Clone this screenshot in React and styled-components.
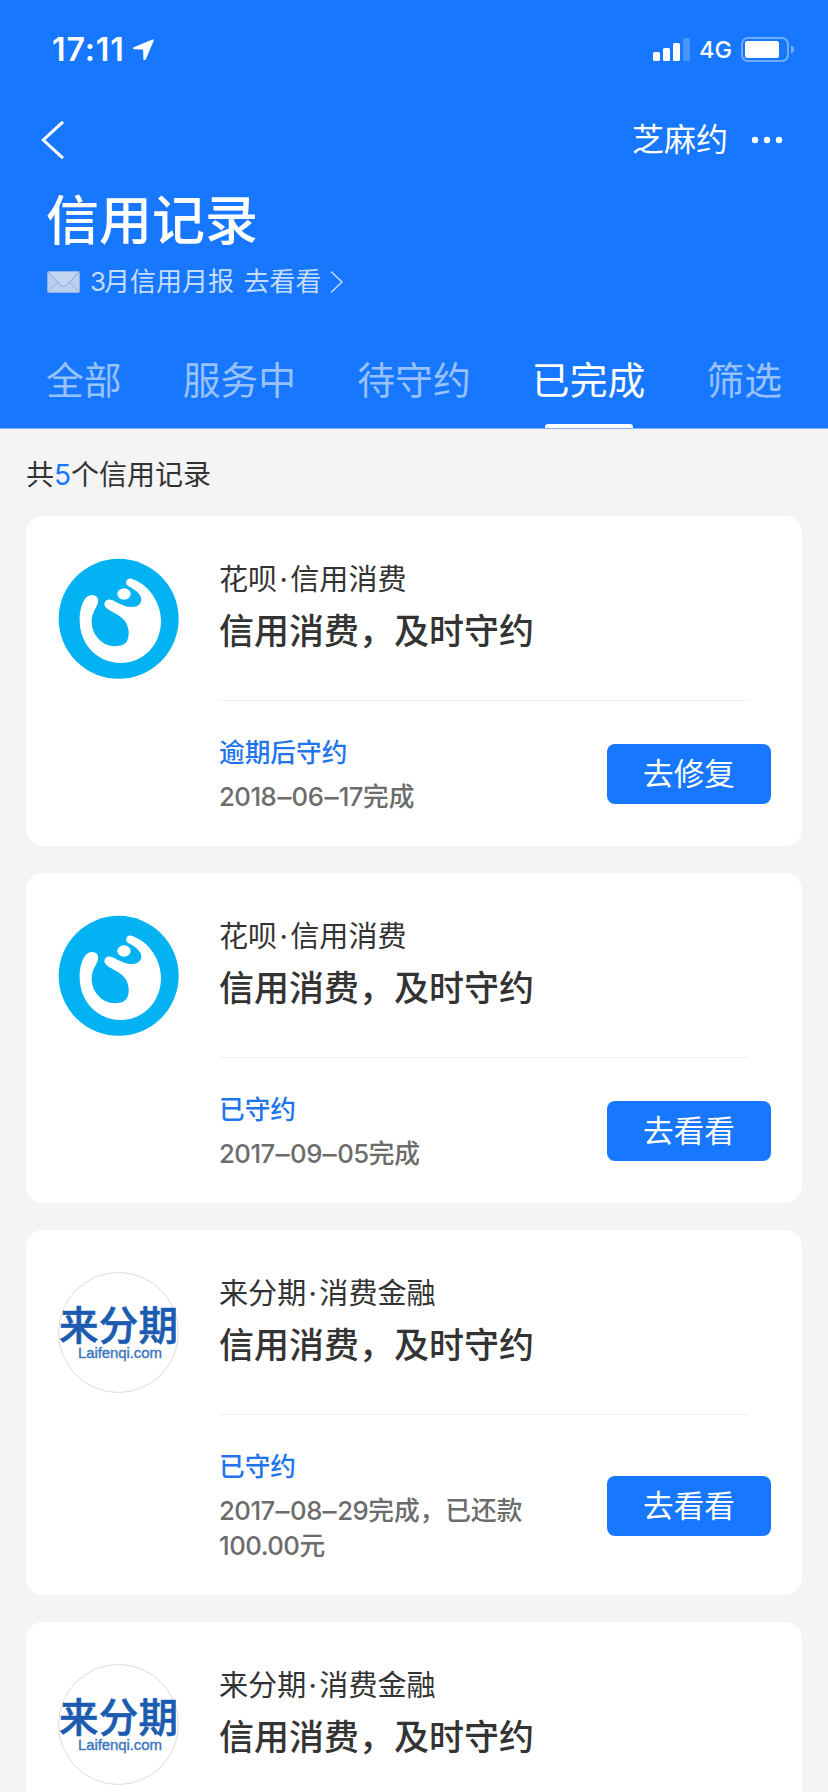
import React from "react";
import styled, { createGlobalStyle } from "styled-components";

const Global = createGlobalStyle`
  * { box-sizing: border-box; }
  body {
    margin: 0;
    background: #f4f4f4;
    font-family: Inter, "Noto Sans CJK SC", sans-serif;
    color: #333;
  }
`;

const Screen = styled.div`
  width: 828px;
  height: 1792px;
  overflow: hidden;
  background: #f4f4f4;
`;

const Header = styled.header`
  height: 429px;
  background: #1777ff;
  border-bottom: 1px solid #7fb2fb;
  color: #fff;
  display: flex;
  flex-direction: column;
`;

const StatusBar = styled.div`
  height: 98px;
  padding: 2px 33px 0 52px;
  display: flex;
  align-items: center;
  justify-content: space-between;
`;

const Clock = styled.div`
  display: flex;
  align-items: center;
  gap: 8px;
  font-size: 32px;
  font-weight: 600;
  line-height: 40px;
  letter-spacing: 0.9px;
`;

const Signals = styled.div`
  display: flex;
  align-items: center;
  gap: 9px;
  font-size: 23.5px;
  font-weight: 500;
  line-height: 30px;
`;

const NavBar = styled.div`
  height: 84px;
  padding: 0 45px 0 41px;
  display: flex;
  align-items: center;
  justify-content: space-between;
`;

const NavActions = styled.div`
  display: flex;
  align-items: center;
  gap: 23px;
  font-size: 32px;
  line-height: 40px;
`;

const PageTitle = styled.h1`
  margin: 7px 0 0 46px;
  font-size: 53px;
  font-weight: 500;
  line-height: 64px;
`;

const Report = styled.a`
  margin: 11px 0 0 47px;
  height: 36px;
  display: flex;
  align-items: center;
  font-size: 26px;
  line-height: 36px;
  color: #c5ddff;
  white-space: pre;
`;

const ReportText = styled.span`
  margin: 0 9px 0 10px;
  word-spacing: 2px;
`;

const Month = styled.span`
  letter-spacing: -2px;
`;

const Tabs = styled.nav`
  flex: 1;
  margin-top: 50px;
  padding: 0 46px 0 46px;
  display: flex;
  justify-content: space-between;
`;

const Tab = styled.a`
  position: relative;
  font-size: 37.8px;
  line-height: 60px;
  color: ${(p) => (p.$active ? "#fff" : "#97c1ff")};
  &::after {
    content: "";
    display: ${(p) => (p.$active ? "block" : "none")};
    position: absolute;
    left: 50%;
    bottom: 0;
    width: 88px;
    height: 4px;
    margin-left: -44px;
    border-radius: 3px 3px 0 0;
    background: #fff;
  }
`;

const Summary = styled.p`
  margin: 0;
  padding: 26px 26px 21px;
  font-size: 28px;
  line-height: 40px;
`;

const Count = styled.span`
  color: #1777ff;
`;

const List = styled.main`
  padding: 0 26px;
  display: flex;
  flex-direction: column;
  gap: 27px;
`;

const Card = styled.article`
  display: flex;
  padding: 42px 31px 31px 32px;
  border-radius: 17px;
  background: #fff;
`;

const LogoSlot = styled.div`
  flex: none;
  width: 121px;
  height: 121px;
`;

const Body = styled.div`
  flex: 1;
  margin-left: 40px;
`;

const Merchant = styled.div`
  padding-top: 1px;
  font-size: 29.1px;
  line-height: 42px;
`;

const Dot = styled.span`
  display: inline-block;
  width: 13px;
  text-align: center;
`;

const Title = styled.h2`
  margin: 4px 0 0;
  font-size: 35px;
  font-weight: 500;
  line-height: 52px;
`;

const Divider = styled.div`
  height: 1px;
  width: 530px;
  margin-top: 43px;
  background: #f0f0f0;
`;

const Footer = styled.div`
  display: flex;
  align-items: center;
  justify-content: space-between;
  margin-top: 32px;
`;

const Result = styled.div`
  width: 330px;
`;

const State = styled.div`
  font-size: 25.7px;
  font-weight: 500;
  line-height: 40px;
  color: #1f76ec;
`;

const Detail = styled.div`
  margin: 6px 0 1px;
  font-size: 25.7px;
  font-weight: 500;
  line-height: 35px;
  color: #6c6c6c;
`;

const Digits = styled.span`
  font-weight: 450;
  letter-spacing: -0.5px;
`;

const Dash = styled.span`
  display: inline-block;
  margin: 0 1.5px;
  transform: scaleX(1.1);
`;

const Action = styled.button`
  width: 164px;
  height: 60px;
  padding: 0;
  border: 0;
  border-radius: 8px;
  background: #1777ff;
  color: #fff;
  font: 400 30.6px/60px Inter, "Noto Sans CJK SC", sans-serif;
`;

function HuabeiLogo() {
  return (
    <svg width="121" height="121" viewBox="53 53 363 363">
      <circle cx="235" cy="235.500" r="180" fill="#03b2f2" />
      <path
        fill="#fff"
        d="M155 164C132 164 118 199 118 240C118 313 172 368 241 368C309 368 362 313 362 241C362 190 328 132 273 115C258 112 251 131 265 138C286 149 304 162 303 180C301 196 285 201 272 200C250 199 232 187 215 179C197 171 184 191 199 204C214 216 238 223 253 241C266 257 269 285 260 302C251 320 215 322 193 310C165 294 153 268 154 240C155 218 167 204 172 190C177 175 170 164 155 164Z"
      />
      <ellipse cx="251" cy="161" rx="20" ry="17" fill="#fff" />
    </svg>
  );
}

function LaifenqiLogo() {
  return (
    <svg width="121" height="121" viewBox="0 0 121 121">
      <circle cx="60.500" cy="60.500" r="60" fill="#fff" stroke="#ddd" />
      <text
        x="1"
        y="67.500"
        fontFamily="Noto Sans CJK SC, sans-serif"
        fontSize="39.500"
        fontWeight="500"
        fill="#1b5bb0"
        stroke="#1b5bb0"
        strokeWidth="0.6"
        textLength="119"
      >
        来分期
      </text>
      <text
        x="20"
        y="85.500"
        fontFamily="Liberation Sans, sans-serif"
        fontSize="15"
        fill="#4076bd"
        stroke="#4076bd"
        strokeWidth="0.4"
        textLength="84"
      >
        Laifenqi.com
      </text>
    </svg>
  );
}

const records = [
  { logo: "huabei", brand: "花呗", kind: "信用消费", state: "逾期后守约", date: ["2018", "06", "17"], note: "完成", action: "去修复" },
  { logo: "huabei", brand: "花呗", kind: "信用消费", state: "已守约", date: ["2017", "09", "05"], note: "完成", action: "去看看" },
  { logo: "laifenqi", brand: "来分期", kind: "消费金融", state: "已守约", date: ["2017", "08", "29"], note: "完成，已还款", amount: "100.00", action: "去看看" },
  { logo: "laifenqi", brand: "来分期", kind: "消费金融" },
];

function RecordCard({ record }) {
  return (
    <Card>
      <LogoSlot>{record.logo === "huabei" ? <HuabeiLogo /> : <LaifenqiLogo />}</LogoSlot>
      <Body>
        <Merchant>
          {record.brand}
          <Dot>·</Dot>
          {record.kind}
        </Merchant>
        <Title>信用消费，及时守约</Title>
        <Divider />
        {record.state && (
          <Footer>
            <Result>
              <State>{record.state}</State>
              <Detail>
                <Digits>
                  {record.date[0]}
                  <Dash>–</Dash>
                  {record.date[1]}
                  <Dash>–</Dash>
                  {record.date[2]}
                </Digits>
                {record.note}
                {record.amount && (
                  <>
                    <Digits>{record.amount}</Digits>元
                  </>
                )}
              </Detail>
            </Result>
            <Action>{record.action}</Action>
          </Footer>
        )}
      </Body>
    </Card>
  );
}

const tabs = ["全部", "服务中", "待守约", "已完成", "筛选"];

export default function App() {
  return (
    <Screen>
      <Global />
      <Header>
        <StatusBar>
          <Clock>
            17:11
            <svg width="21" height="22" viewBox="0 0 21 22">
              <path d="M19.500 0.600Q21.200 0.200 20.600 2L12.800 20.200Q11.400 22 10.400 20.200L10.200 11.600Q10 10.700 9.200 10.600L1 10.200Q-0.800 9.500 0.800 8.300Z" fill="#fff" />
            </svg>
          </Clock>
          <Signals>
            <svg width="37" height="24" viewBox="0 0 37 24" fill="#fff">
              <rect x="0" y="14" width="7" height="9" rx="1.500" />
              <rect x="10" y="10" width="7" height="13" rx="1.500" />
              <rect x="20" y="5" width="7" height="18" rx="1.500" />
              <rect x="30" y="0" width="7" height="23" rx="1.500" opacity="0.22" />
            </svg>
            4G
            <svg width="54" height="26" viewBox="0 0 54 26">
              <rect x="1" y="1" width="46" height="23" rx="6" fill="none" stroke="#6fabff" strokeWidth="2" />
              <rect x="4" y="4" width="34" height="17" rx="2.500" fill="#fff" />
              <path d="M50 8.500Q53 9 53 12.500Q53 16 50 16.500Z" fill="#6fabff" />
            </svg>
          </Signals>
        </StatusBar>
        <NavBar>
          <svg width="23" height="38" viewBox="0 0 23 38">
            <path d="M22 0.800L2.300 19L22 37.200" fill="none" stroke="#fff" strokeWidth="3" />
          </svg>
          <NavActions>
            芝麻约
            <svg width="32" height="8" viewBox="0 0 32 8" fill="#fff">
              <circle cx="4" cy="4" r="3.200" />
              <circle cx="16" cy="4" r="3.200" />
              <circle cx="28" cy="4" r="3.200" />
            </svg>
          </NavActions>
        </NavBar>
        <PageTitle>信用记录</PageTitle>
        <Report>
          <svg width="33" height="22" viewBox="0 0 33 22">
            <rect x="0.500" y="0.500" width="32" height="21" rx="1" fill="#b9cfed" stroke="#8eb0e3" />
            <path d="M1 21L12 10M32 21L21 10" stroke="#94b2de" fill="none" />
            <path d="M1 1L14 14.500Q16.500 16.500 19 14.500L32 1" fill="#c3d6f1" stroke="#83a6db" />
          </svg>
          <ReportText>
            <Month>3</Month>月信用月报 去看看
          </ReportText>
          <svg width="13" height="24" viewBox="0 0 13 24">
            <path d="M1 1.500L12 12L1 22.500" fill="none" stroke="#c5ddff" strokeWidth="1.500" />
          </svg>
        </Report>
        <Tabs>
          {tabs.map((name) => (
            <Tab key={name} $active={name === "已完成"}>
              {name}
            </Tab>
          ))}
        </Tabs>
      </Header>
      <Summary>
        共<Count>5</Count>个信用记录
      </Summary>
      <List>
        {records.map((record, i) => (
          <RecordCard key={i} record={record} />
        ))}
      </List>
    </Screen>
  );
}
